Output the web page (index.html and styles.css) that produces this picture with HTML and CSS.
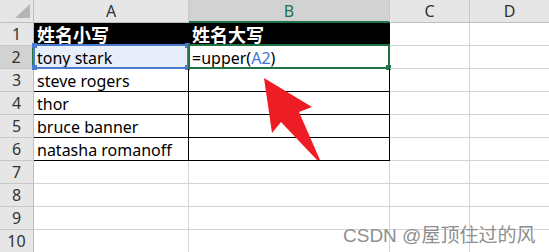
FILE: index.html
```html
<!DOCTYPE html>
<html lang="zh">
<head>
<meta charset="utf-8">
<title>Sheet</title>
<link rel="stylesheet" href="styles.css">
</head>
<body>
<div class="sheet">
  <div class="corner"><svg width="33" height="22" viewBox="0 0 33 22"><polygon points="15,18 30,4 30,18" fill="#b5b5b5"/></svg></div>
  <div class="colhead">A</div>
  <div class="colhead active">B</div>
  <div class="colhead">C</div>
  <div class="colhead">D</div>

  <div class="rowhead">1</div>
  <div class="cell title">姓名小写</div>
  <div class="cell title">姓名大写</div>
  <div class="cell"></div>
  <div class="cell"></div>

  <div class="rowhead active">2</div>
  <div class="cell tb ref">tony stark<span class="ref-box"><i class="h tl"></i><i class="h tr"></i><i class="h bl"></i><i class="h br"></i></span></div>
  <div class="cell tb edit">=upper(<span class="refword">A2</span>)<span class="edit-box"><i class="g br"></i></span></div>
  <div class="cell"></div>
  <div class="cell"></div>

  <div class="rowhead">3</div>
  <div class="cell tb">steve rogers</div>
  <div class="cell tb"></div>
  <div class="cell"></div>
  <div class="cell"></div>

  <div class="rowhead">4</div>
  <div class="cell tb">thor</div>
  <div class="cell tb"></div>
  <div class="cell"></div>
  <div class="cell"></div>

  <div class="rowhead">5</div>
  <div class="cell tb">bruce banner</div>
  <div class="cell tb"></div>
  <div class="cell"></div>
  <div class="cell"></div>

  <div class="rowhead">6</div>
  <div class="cell tb">natasha romanoff</div>
  <div class="cell tb"></div>
  <div class="cell"></div>
  <div class="cell"></div>

  <div class="rowhead">7</div>
  <div class="cell"></div>
  <div class="cell"></div>
  <div class="cell"></div>
  <div class="cell"></div>

  <div class="rowhead">8</div>
  <div class="cell"></div>
  <div class="cell"></div>
  <div class="cell"></div>
  <div class="cell"></div>

  <div class="rowhead">9</div>
  <div class="cell"></div>
  <div class="cell"></div>
  <div class="cell"></div>
  <div class="cell"></div>

  <div class="rowhead">10</div>
  <div class="cell"></div>
  <div class="cell"></div>
  <div class="cell"></div>
  <div class="cell"></div>

  <svg class="arrow" width="549" height="252" viewBox="0 0 549 252"><polygon points="264,78 312,107 299,112 320,160 317,160 281,122 272,133" fill="#ee1c25"/></svg>
  <div class="watermark">CSDN @屋顶住过的风</div>
</div>
</body>
</html>
```

FILE: styles.css
```css
html, body {
  margin: 0;
  padding: 0;
  background: #ffffff;
  overflow: hidden;
}

.sheet {
  position: relative;
  display: grid;
  grid-template-columns: 34px 155px 201px 80px 80px;
  grid-auto-rows: 23px;
  width: 550px;
  font-family: "Noto Sans", "Noto Sans CJK SC", sans-serif;
  font-size: 16px;
  color: #000;
}

.sheet > div {
  box-sizing: border-box;
}

.corner {
  background: #e6e6e6;
  border-right: 1px solid #bdbdbd;
  border-bottom: 1px solid #bdbdbd;
}
.corner svg { display: block; }

.colhead {
  background: #e6e6e6;
  border-right: 1px solid #c8c8c8;
  border-bottom: 1px solid #bdbdbd;
  display: flex;
  align-items: center;
  justify-content: center;
  color: #333;
  font-size: 16px;
  line-height: 22px;
}
.colhead.active {
  background: #d2d2d2;
  color: #217346;
  border-bottom: 2px solid #217346;
}

.rowhead {
  background: #e6e6e6;
  border-right: 1px solid #bdbdbd;
  border-bottom: 1px solid #c8c8c8;
  display: flex;
  align-items: center;
  justify-content: center;
  color: #333;
  font-size: 16px;
  line-height: 22px;
}
.rowhead.active {
  background: #d2d2d2;
  color: #333;
  border-right: 2px solid #217346;
}

.cell {
  position: relative;
  border-right: 1px solid #d4d4d4;
  border-bottom: 1px solid #d4d4d4;
  padding-left: 3px;
  line-height: 24px;
  white-space: nowrap;
  overflow: visible;
}

.cell.title {
  background: #000;
  color: #fff;
  font-family: "Noto Sans CJK SC", sans-serif;
  font-weight: bold;
  font-size: 18px;
  line-height: 23px;
  border-right-color: #000;
  border-bottom-color: #000;
}

.cell.tb {
  border-right-color: #000;
  border-bottom-color: #000;
}

.cell.ref {
  background: #e8eef9;
}

.refword { color: #3e74d6; }

.ref-box {
  position: absolute;
  left: -1px;
  top: -2px;
  right: -1px;
  bottom: -1px;
  border: 2px solid #4a7bd0;
  box-sizing: border-box;
}
.edit-box {
  position: absolute;
  left: -1px;
  top: -2px;
  right: -1px;
  bottom: -1px;
  border: 2px solid #217346;
  box-sizing: border-box;
}

.h, .g {
  position: absolute;
  width: 5px;
  height: 5px;
  background: #4a7bd0;
}
.g { background: #217346; }
.tl { left: -3px; top: -3px; }
.tr { right: -3px; top: -3px; }
.bl { left: -3px; bottom: -3px; }
.br { right: -3px; bottom: -3px; }

.arrow {
  position: absolute;
  left: 0;
  top: 0;
  pointer-events: none;
}

.watermark {
  position: absolute;
  left: 343px;
  top: 224px;
  font-family: "Liberation Sans", "Noto Sans CJK SC", sans-serif;
  font-size: 19px;
  line-height: 24px;
  color: #8e8e8e;
  text-shadow: 0 0 1px #ffffff;
  white-space: nowrap;
}
```
